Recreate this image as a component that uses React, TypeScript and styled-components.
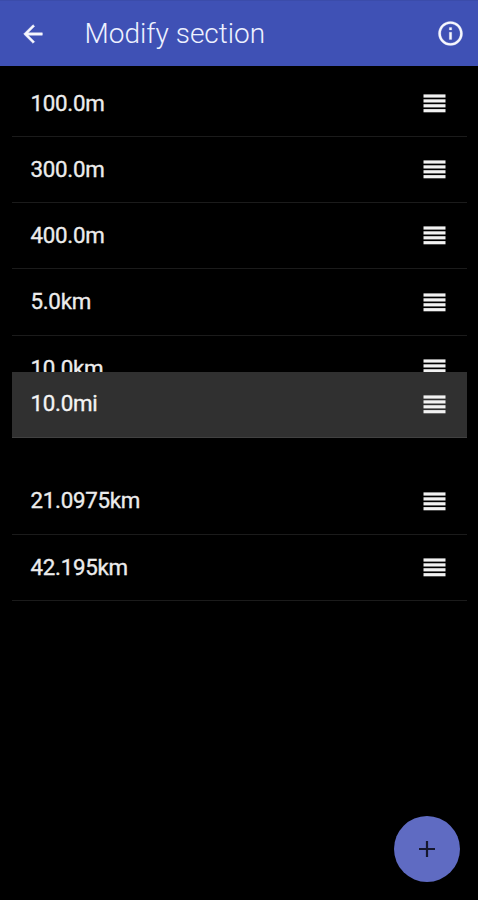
import React from "react";
import styled, { createGlobalStyle } from "styled-components";

const GlobalStyle = createGlobalStyle`
  *, *::before, *::after { box-sizing: border-box; }
  body {
    margin: 0;
    background: #000;
    font-family: Roboto, "Liberation Sans", sans-serif;
  }
`;

const Screen = styled.main`
  position: relative;
  width: 100%;
  height: 900px;
  overflow: hidden;
  background: #000;
`;

const Toolbar = styled.header`
  display: flex;
  align-items: center;
  height: 66px;
  padding: 0 13px 0 19px;
  background: #3f51b5;
  color: #f6f7fd;
  border-top: 1px solid #3b4caa;
`;

const Title = styled.h1`
  flex: 1;
  margin: 0 0 0 37.5px;
  font-size: 28px;
  line-height: 32px;
  font-weight: 300;
  color: #eef1ff;
`;

const IconButton = styled.button`
  display: flex;
  padding: 0;
  border: 0;
  background: none;
  color: inherit;
`;

const List = styled.ul`
  position: relative;
  margin: 0;
  padding: 4.6px 11px 0 11.5px;
  list-style: none;
`;

const Row = styled.li<{ $dragging?: boolean }>`
  display: flex;
  align-items: center;
  justify-content: space-between;
  height: 66.3px;
  padding: 0 21.5px 0 19px;
  color: #ececec;
  border-bottom: 1px solid #1b1b1b;
  ${(p) =>
    p.$dragging &&
    `
    position: absolute;
    top: 305.5px;
    left: 11.5px;
    right: 11px;
    color: #f4f4f4;
    background: #303030;
    border-bottom-color: #414141;
  `}
`;

const Gap = styled.li`
  height: 66.3px;
`;

const Label = styled.span`
  padding-bottom: 1.4px;
  font-size: 22.3px;
  line-height: 28px;
  font-weight: 400;
  letter-spacing: -0.27px;
  -webkit-text-stroke: 0.35px currentColor;
`;

const Fab = styled.button`
  position: absolute;
  right: 18px;
  bottom: 18px;
  display: flex;
  align-items: center;
  justify-content: center;
  width: 66px;
  height: 66px;
  padding: 0;
  border: 0;
  border-radius: 50%;
  background: #5f6bc2;
  color: #15172e;
`;

const BackIcon = () => (
  <svg
    width="28"
    height="28"
    viewBox="0 0 24 24"
    fill="currentColor"
    stroke="currentColor"
    strokeWidth="0.4"
  >
    <path d="M20 11H7.83l5.59-5.59L12 4l-8 8 8 8 1.41-1.41L7.83 13H20v-2z" />
  </svg>
);

const InfoIcon = () => (
  <svg
    width="29"
    height="29"
    viewBox="0 0 24 24"
    fill="currentColor"
    stroke="currentColor"
    strokeWidth="0.2"
  >
    <path d="M11 7h2v2h-2zm0 4h2v6h-2zm1-9C6.48 2 2 6.48 2 12s4.48 10 10 10 10-4.48 10-10S17.52 2 12 2zm0 18c-4.41 0-8-3.59-8-8s3.59-8 8-8 8 3.59 8 8-3.59 8-8 8z" />
  </svg>
);

const Handle = () => (
  <svg width="23" height="19" viewBox="0 0 23 19" fill="#f2f2f2">
    <rect x="0.5" y="0.4" width="22" height="3.2" />
    <rect x="0.5" y="5.3" width="22" height="3.2" />
    <rect x="0.5" y="10.2" width="22" height="3.2" />
    <rect x="0.5" y="15.1" width="22" height="3.2" />
  </svg>
);

const PlusIcon = () => (
  <svg
    width="18"
    height="18"
    viewBox="0 0 18 18"
    fill="none"
    stroke="currentColor"
    strokeWidth="2.2"
  >
    <path d="M9 1v16M1 9h16" />
  </svg>
);

const Section = ({ label, dragging }: { label: string; dragging?: boolean }) => (
  <Row $dragging={dragging}>
    <Label>{label}</Label>
    <Handle />
  </Row>
);

const before = ["100.0m", "300.0m", "400.0m", "5.0km", "10.0km"];
const after = ["21.0975km", "42.195km"];

export default function App() {
  return (
    <>
      <GlobalStyle />
      <Screen>
        <Toolbar>
          <IconButton aria-label="Back">
            <BackIcon />
          </IconButton>
          <Title>Modify section</Title>
          <IconButton aria-label="Information">
            <InfoIcon />
          </IconButton>
        </Toolbar>
        <List>
          {before.map((label) => (
            <Section key={label} label={label} />
          ))}
          <Gap />
          {after.map((label) => (
            <Section key={label} label={label} />
          ))}
          <Section label="10.0mi" dragging />
        </List>
        <Fab aria-label="Add section">
          <PlusIcon />
        </Fab>
      </Screen>
    </>
  );
}
